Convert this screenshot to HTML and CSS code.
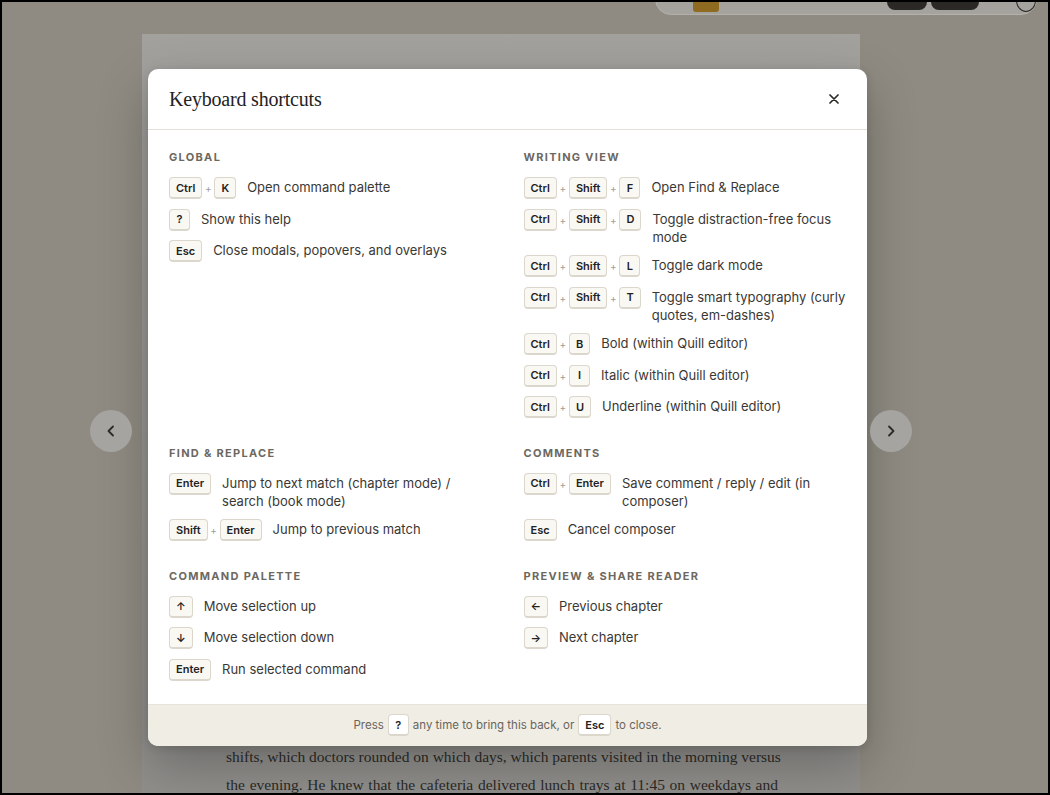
FILE: index.html
```html
<!DOCTYPE html>
<html lang="en">
<head>
<meta charset="utf-8">
<title>Keyboard shortcuts</title>
<link rel="stylesheet" href="styles.css">
</head>
<body>
<div class="frame">
  <div class="app">
    <div class="toolbar">
      <span class="tb-swatch"></span>
      <span class="tb-pill"></span>
      <span class="tb-pill wide"></span>
      <span class="tb-circle"></span>
    </div>
    <div class="paper">
      <p class="prose"><span class="line">shifts, which doctors rounded on which days, which parents visited in the morning versus</span><span class="line">the evening. He knew that the cafeteria delivered lunch trays at 11:45 on weekdays and</span></p>
    </div>
  </div>

  <div class="overlay">
    <button class="nav nav-prev" aria-label="Previous">
      <svg width="14" height="14" viewBox="0 0 14 14"><polyline points="9,2.5 4.5,7 9,11.5" fill="none" stroke="#2b2a27" stroke-width="1.8" stroke-linecap="round" stroke-linejoin="round"/></svg>
    </button>
    <button class="nav nav-next" aria-label="Next">
      <svg width="14" height="14" viewBox="0 0 14 14"><polyline points="5,2.5 9.5,7 5,11.5" fill="none" stroke="#2b2a27" stroke-width="1.8" stroke-linecap="round" stroke-linejoin="round"/></svg>
    </button>

    <div class="modal" role="dialog">
      <div class="modal-header">
        <h2 class="modal-title">Keyboard shortcuts</h2>
        <button class="close" aria-label="Close">
          <svg width="10" height="10" viewBox="0 0 10 10"><path d="M1 1 L9 9 M9 1 L1 9" stroke="#2b2a27" stroke-width="1.7" stroke-linecap="round"/></svg>
        </button>
      </div>

      <div class="modal-body">
        <section class="group">
          <h3 class="group-title">GLOBAL</h3>
          <ul class="list">
            <li class="row"><span class="keys"><kbd>Ctrl</kbd><i>+</i><kbd>K</kbd></span><span class="desc">Open command palette</span></li>
            <li class="row"><span class="keys"><kbd>?</kbd></span><span class="desc">Show this help</span></li>
            <li class="row"><span class="keys"><kbd>Esc</kbd></span><span class="desc">Close modals, popovers, and overlays</span></li>
          </ul>
        </section>

        <section class="group">
          <h3 class="group-title">WRITING VIEW</h3>
          <ul class="list">
            <li class="row"><span class="keys"><kbd>Ctrl</kbd><i>+</i><kbd>Shift</kbd><i>+</i><kbd>F</kbd></span><span class="desc">Open Find &amp; Replace</span></li>
            <li class="row"><span class="keys"><kbd>Ctrl</kbd><i>+</i><kbd>Shift</kbd><i>+</i><kbd>D</kbd></span><span class="desc">Toggle distraction-free focus mode</span></li>
            <li class="row"><span class="keys"><kbd>Ctrl</kbd><i>+</i><kbd>Shift</kbd><i>+</i><kbd>L</kbd></span><span class="desc">Toggle dark mode</span></li>
            <li class="row"><span class="keys"><kbd>Ctrl</kbd><i>+</i><kbd>Shift</kbd><i>+</i><kbd>T</kbd></span><span class="desc">Toggle smart typography (curly quotes, em-dashes)</span></li>
            <li class="row"><span class="keys"><kbd>Ctrl</kbd><i>+</i><kbd>B</kbd></span><span class="desc">Bold (within Quill editor)</span></li>
            <li class="row"><span class="keys"><kbd>Ctrl</kbd><i>+</i><kbd>I</kbd></span><span class="desc">Italic (within Quill editor)</span></li>
            <li class="row"><span class="keys"><kbd>Ctrl</kbd><i>+</i><kbd>U</kbd></span><span class="desc">Underline (within Quill editor)</span></li>
          </ul>
        </section>

        <section class="group">
          <h3 class="group-title">FIND &amp; REPLACE</h3>
          <ul class="list">
            <li class="row"><span class="keys"><kbd>Enter</kbd></span><span class="desc">Jump to next match (chapter mode) / search (book mode)</span></li>
            <li class="row"><span class="keys"><kbd>Shift</kbd><i>+</i><kbd>Enter</kbd></span><span class="desc">Jump to previous match</span></li>
          </ul>
        </section>

        <section class="group">
          <h3 class="group-title">COMMENTS</h3>
          <ul class="list">
            <li class="row"><span class="keys"><kbd>Ctrl</kbd><i>+</i><kbd>Enter</kbd></span><span class="desc">Save comment / reply / edit (in composer)</span></li>
            <li class="row"><span class="keys"><kbd>Esc</kbd></span><span class="desc">Cancel composer</span></li>
          </ul>
        </section>

        <section class="group">
          <h3 class="group-title">COMMAND PALETTE</h3>
          <ul class="list">
            <li class="row"><span class="keys"><kbd>↑</kbd></span><span class="desc">Move selection up</span></li>
            <li class="row"><span class="keys"><kbd>↓</kbd></span><span class="desc">Move selection down</span></li>
            <li class="row"><span class="keys"><kbd>Enter</kbd></span><span class="desc">Run selected command</span></li>
          </ul>
        </section>

        <section class="group">
          <h3 class="group-title">PREVIEW &amp; SHARE READER</h3>
          <ul class="list">
            <li class="row"><span class="keys"><kbd>←</kbd></span><span class="desc">Previous chapter</span></li>
            <li class="row"><span class="keys"><kbd>→</kbd></span><span class="desc">Next chapter</span></li>
          </ul>
        </section>
      </div>

      <div class="modal-footer">
        Press <kbd>?</kbd> any time to bring this back, or <kbd>Esc</kbd> to close.
      </div>
    </div>
  </div>
</div>
</body>
</html>
```

FILE: styles.css
```css
* { box-sizing: border-box; }

html, body {
  margin: 0;
  padding: 0;
  height: 100%;
}

body {
  font-family: Inter, "Noto Sans", "Liberation Sans", sans-serif;
  background: #000;
  overflow: hidden;
}

.frame {
  position: relative;
  width: 1050px;
  height: 795px;
  border: 2px solid #000;
  overflow: hidden;
}

.app {
  position: relative;
  height: 100%;
  background: #8f8b82;
  overflow: hidden;
}

/* toolbar peeking at the top right (behind the dim) */
.toolbar {
  position: absolute;
  top: -15px;
  left: 653px;
  width: 382px;
  height: 28px;
  border-radius: 0 0 16px 16px;
  background: #a5a39e;
  border: 1px solid #b3b1ac;
  display: flex;
  align-items: flex-start;
  padding-top: 6px;
}
.tb-swatch {
  width: 31px;
  height: 18px;
  margin-left: 37px;
  border-radius: 3px;
  background: #8e6b20;
}
.tb-pill {
  width: 48px;
  height: 16px;
  margin-left: 168px;
  border-radius: 10px;
  background: #2a2925;
}
.tb-pill.wide {
  width: 56px;
  margin-left: 4px;
}
.tb-circle {
  width: 24px;
  height: 24px;
  margin-left: 37px;
  margin-top: -6px;
  border-radius: 50%;
  border: 1.5px solid #2a2925;
}

.paper {
  position: absolute;
  top: 32px;
  left: 140px;
  width: 718px;
  height: 780px;
  background: linear-gradient(#a2a19e, #9a9996 40%, #8f8e8b);
  padding: 709px 82px 0 84px;
}
.prose {
  margin: 0;
  font-family: "Liberation Serif", "DejaVu Serif", serif;
  font-size: 15.5px;
  line-height: 28px;
  color: #2b2a27;
}
.prose .line {
  display: block;
  text-align: justify;
  text-align-last: justify;
  white-space: nowrap;
}

/* overlay + modal */
.overlay {
  position: absolute;
  inset: 0;
  display: flex;
  justify-content: center;
  align-items: flex-start;
  padding: 67px 35px 0 0;
}

.nav {
  position: absolute;
  top: 408px;
  width: 42px;
  height: 42px;
  border-radius: 50%;
  border: none;
  background: #a5a4a0;
  display: flex;
  align-items: center;
  justify-content: center;
  padding: 0;
}
.nav-prev { left: 88px; }
.nav-next { left: 868px; }

.modal {
  width: 719px;
  background: #fff;
  border-radius: 10px;
  box-shadow: 0 20px 50px rgba(0, 0, 0, 0.25), 0 2px 8px rgba(0, 0, 0, 0.12);
  overflow: hidden;
}

.modal-header {
  height: 61px;
  display: flex;
  align-items: center;
  justify-content: space-between;
  padding: 0 28px 0 21px;
  border-bottom: 1px solid #e2dfd8;
}
.modal-title {
  margin: 0;
  font-family: "Liberation Serif", "DejaVu Serif", serif;
  font-weight: 400;
  font-size: 20px;
  color: #23221f;
  letter-spacing: -0.2px;
}
.close {
  border: none;
  background: none;
  padding: 0;
  width: 10px;
  height: 10px;
  display: flex;
}

.modal-body {
  display: grid;
  grid-template-columns: 1fr 1fr;
  column-gap: 32px;
  row-gap: 27.5px;
  padding: 20px 21px 23px 21px;
}

.group-title {
  margin: 0 0 13px 0;
  font-size: 11px;
  line-height: 14px;
  font-weight: 700;
  letter-spacing: 1.3px;
  color: #6d685f;
}

.list {
  list-style: none;
  margin: 0;
  padding: 0;
  display: flex;
  flex-direction: column;
  gap: 9.5px;
}

.row {
  display: flex;
  align-items: flex-start;
  gap: 11px;
}

.keys {
  display: flex;
  align-items: center;
  flex-shrink: 0;
}
.keys i {
  font-style: normal;
  font-size: 10px;
  color: #a19d95;
  width: 12px;
  text-align: center;
}

kbd {
  display: inline-flex;
  align-items: center;
  justify-content: center;
  height: 22px;
  min-width: 21px;
  padding: 0 6px;
  border: 1px solid #dcd7cc;
  border-bottom-width: 2px;
  border-radius: 4px;
  background: #faf8f3;
  font-family: Inter, "Noto Sans", "Liberation Sans", sans-serif;
  font-size: 11px;
  font-weight: 600;
  color: #23221f;
}

.desc {
  font-size: 13px;
  line-height: 18px;
  margin-top: 1px;
  color: #3a3835;
}

.modal-footer {
  height: 42px;
  background: #f0ede5;
  border-top: 1px solid #e8e4db;
  display: flex;
  align-items: center;
  justify-content: center;
  gap: 4px;
  font-size: 11.5px;
  color: #6a655c;
}
.modal-footer kbd {
  background: #fff;
}
```
